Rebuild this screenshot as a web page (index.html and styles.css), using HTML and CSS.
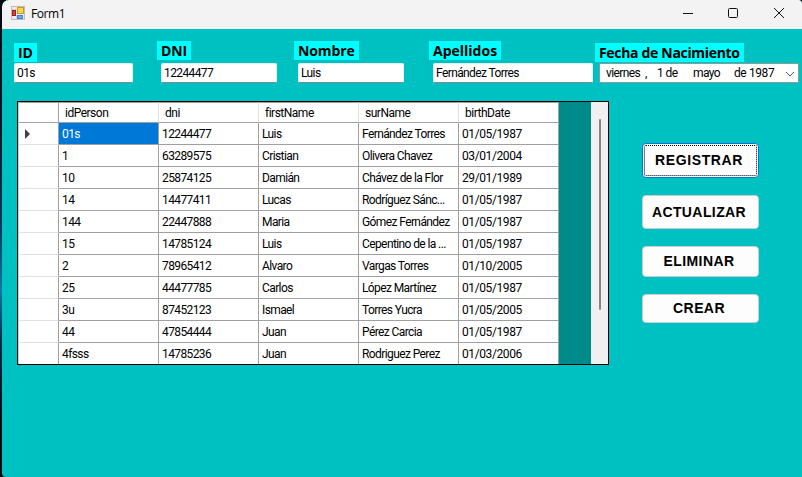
FILE: index.html
```
<!DOCTYPE html>
<html lang="es">
<head>
<meta charset="utf-8">
<title>Form1</title>
<link rel="stylesheet" href="styles.css">
</head>
<body>
<div class="window">
  <header class="titlebar">
    <svg class="app-icon" width="14" height="14" viewBox="0 0 14 14">
      <rect x=".5" y=".5" width="13" height="13" fill="#ececef" stroke="#bdbdc1"/>
      <path d="M5.5 9v4M1 3.5h4" stroke="#d2d2d6"/>
      <rect x="1.5" y="4.5" width="3" height="5" fill="#d8402f" stroke="#9c2018"/>
      <rect x="6.5" y="1.5" width="6" height="6" fill="#fcd34a" stroke="#c9981c"/>
      <rect x="6.5" y="9.5" width="5" height="3" fill="#6ca4f2" stroke="#4a7cd0"/>
    </svg>
    <span class="title">Form1</span>
    <svg class="controls" width="104" height="12" viewBox="0 0 104 12" fill="none" stroke="#111">
      <path d="M0 6.5h10"/>
      <rect x="45.5" y="1.5" width="9" height="9" rx="1"/>
      <path d="M91 1l10 10M101 1L91 11"/>
    </svg>
  </header>
  <main class="form">
    <div class="fields">
      <div class="field f-id"><label class="low">ID</label><div class="input"><span>01s</span></div></div>
      <div class="field f-dni"><label>DNI</label><div class="input num"><span>12244477</span></div></div>
      <div class="field f-name"><label>Nombre</label><div class="input"><span>Luis</span></div></div>
      <div class="field f-last"><label>Apellidos</label><div class="input"><span>Fernández Torres</span></div></div>
      <div class="field f-date"><label class="low">Fecha de Nacimiento</label>
        <div class="input date"><span class="d-week">viernes</span><span class="d-comma">,</span><span class="d-day">1 de</span><span class="d-month">mayo</span><span class="d-year">de 1987</span>
          <svg width="10" height="6" viewBox="0 0 10 6" fill="none" stroke="#555"><path d="M1 1l4 4 4-4"/></svg>
        </div>
      </div>
    </div>
    <div class="content">
      <div class="grid">
        <table>
          <colgroup><col class="c-head"><col><col><col><col><col></colgroup>
          <thead><tr><th></th><th>idPerson</th><th>dni</th><th>firstName</th><th>surName</th><th>birthDate</th></tr></thead>
          <tbody>
            <tr><td><i class="marker"></i></td><td class="selected">01s</td><td>12244477</td><td>Luis</td><td>Fernández Torres</td><td>01/05/1987</td></tr>
            <tr><td></td><td>1</td><td>63289575</td><td>Cristian</td><td>Olivera Chavez</td><td>03/01/2004</td></tr>
            <tr><td></td><td>10</td><td>25874125</td><td>Damián</td><td>Chávez de la Flor</td><td>29/01/1989</td></tr>
            <tr><td></td><td>14</td><td>14477411</td><td>Lucas</td><td>Rodríguez Sánc...</td><td>01/05/1987</td></tr>
            <tr><td></td><td>144</td><td>22447888</td><td>Maria</td><td>Gómez Fernández</td><td>01/05/1987</td></tr>
            <tr><td></td><td>15</td><td>14785124</td><td>Luis</td><td>Cepentino de la ...</td><td>01/05/1987</td></tr>
            <tr><td></td><td>2</td><td>78965412</td><td>Alvaro</td><td>Vargas Torres</td><td>01/10/2005</td></tr>
            <tr><td></td><td>25</td><td>44477785</td><td>Carlos</td><td>López Martínez</td><td>01/05/1987</td></tr>
            <tr><td></td><td>3u</td><td>87452123</td><td>Ismael</td><td>Torres Yucra</td><td>01/05/2005</td></tr>
            <tr><td></td><td>44</td><td>47854444</td><td>Juan</td><td>Pérez Carcia</td><td>01/05/1987</td></tr>
            <tr><td></td><td>4fsss</td><td>14785236</td><td>Juan</td><td>Rodriguez Perez</td><td>01/03/2006</td></tr>
          </tbody>
        </table>
        <div class="scrollbar"><div class="thumb"></div></div>
      </div>
      <div class="actions">
        <button class="focused">REGISTRAR</button>
        <button class="b-update">ACTUALIZAR</button>
        <button class="b-delete">ELIMINAR</button>
        <button class="b-create">CREAR</button>
      </div>
    </div>
  </main>
</div>
</body>
</html>
```
FILE: styles.css
```
* { box-sizing: border-box; }
body {
  margin: 0;
  height: 477px;
  padding-left: 2px;
  overflow: hidden;
  background: linear-gradient(#05080f 0, #0a1626 130px, #0b3a5c 230px, #1178a5 290px, #0a2c48 340px, #05080f 420px);
  font: 12px/14px Roboto, "Liberation Sans", sans-serif;
  letter-spacing: -0.6px;
  color: #000;
}
.window { height: 477px; border-radius: 7px 4px 0 4px; overflow: hidden; background: #00c1c1; }
.titlebar { height: 29px; background: #f3f3f3; display: flex; align-items: center; padding: 0 15px 3px 9px; }
.app-icon { flex: none; }
.title { margin-left: 6px; padding-top: 2px; font: 12px/16px "Open Sans", sans-serif; letter-spacing: -0.4px; }
.controls { margin-left: auto; }

.fields { display: flex; padding: 12px 0 0 12px; height: 72px; }
.field { flex: none; display: flex; flex-direction: column; align-items: flex-start; }
.f-id { width: 119px; }
.f-dni { width: 116px; margin-left: 28px; }
.f-name { width: 106px; margin-left: 21px; }
.f-last { width: 160px; margin-left: 29px; }
.f-date { width: 200px; margin-left: 6px; }
label {
  height: 19px;
  margin: 0 0 3px -4px;
  padding: 0 4px;
  background: #00ffff;
  font: bold 14px/19px "Open Sans", "Noto Sans", sans-serif;
  letter-spacing: -0.1px;
  white-space: nowrap;
}
label.low { margin-top: 2px; margin-bottom: 1px; }
.f-id label { margin-left: 0; }
.f-last label { letter-spacing: 0; }
.f-date label { letter-spacing: -0.32px; }
.input {
  width: 100%;
  height: 20px;
  padding: 2px;
  background: #fff;
  border: 1px solid #e3f1f1;
  border-bottom-color: #868686;
  border-radius: 2px;
  white-space: nowrap;
}
.input.date { display: flex; padding: 2px 3px 2px 6px; border: 1px solid #8a9a9a; border-radius: 0; }
.date span { flex: none; }
.d-week { width: 39px; }
.d-comma { width: 12px; }
.d-day { width: 36px; }
.d-month { width: 41px; }
.d-year { letter-spacing: -0.4px; }
.date svg { margin: 5px 0 0 auto; flex: none; }

.content { display: flex; padding-left: 15px; align-items: flex-start; }
.grid { width: 592px; height: 264px; border: 1px solid #000; background: #008b8b; display: flex; overflow: hidden; }
table { flex: none; width: 541px; table-layout: fixed; border-collapse: separate; border-spacing: 0; background: #fff; border-left: 1px solid #ccc; }
col { width: 100px; }
col.c-head { width: 40px; }
th, td { padding: 0 0 0 3px; text-align: left; font-weight: normal; white-space: nowrap; overflow: hidden; border-right: 1px solid #a0a0a0; border-bottom: 1px solid #a0a0a0; }
th { height: 21px; padding-left: 6px; border-right-color: #e0e0e0; border-top: 1px solid #a0a0a0; letter-spacing: -0.5px; }
th:first-child, th:last-child { border-right-color: #a0a0a0; }
td { height: 22px; }
td:first-child { border-bottom-color: #e0e0e0; }
td:last-child { letter-spacing: -0.4px; }
td.selected { background: #0078d7; color: #fff; }
.marker { display: block; margin-left: 3px; width: 0; border: 5px solid transparent; border-left-color: #404040; border-right: 0; }
.scrollbar { width: 17px; margin-left: auto; background: #f0f0f0; padding: 17px 0 0 8px; }
.thumb { width: 2px; height: 191px; background: #858585; border-radius: 1px; }

.actions { display: flex; flex-direction: column; width: 117px; margin: 42px 0 0 33px; }
button {
  width: 117px;
  padding: 0 3px 1px 0;
  border: 1px solid #c8d0d0;
  border-radius: 4px;
  background: #fdfdfd;
  color: #000;
  font: bold 14px/16px "Liberation Sans", sans-serif;
  letter-spacing: 0.6px;
}
.focused { height: 35px; border-color: #0078d7; outline: 1px dotted #000; outline-offset: -3px; }
.b-update { height: 34px; margin-top: 17px; padding-bottom: 0; letter-spacing: 0.4px; }
.b-delete { height: 31px; margin-top: 17px; letter-spacing: 0.4px; }
.b-create { height: 29px; margin-top: 17px; letter-spacing: 0.4px; }
```
